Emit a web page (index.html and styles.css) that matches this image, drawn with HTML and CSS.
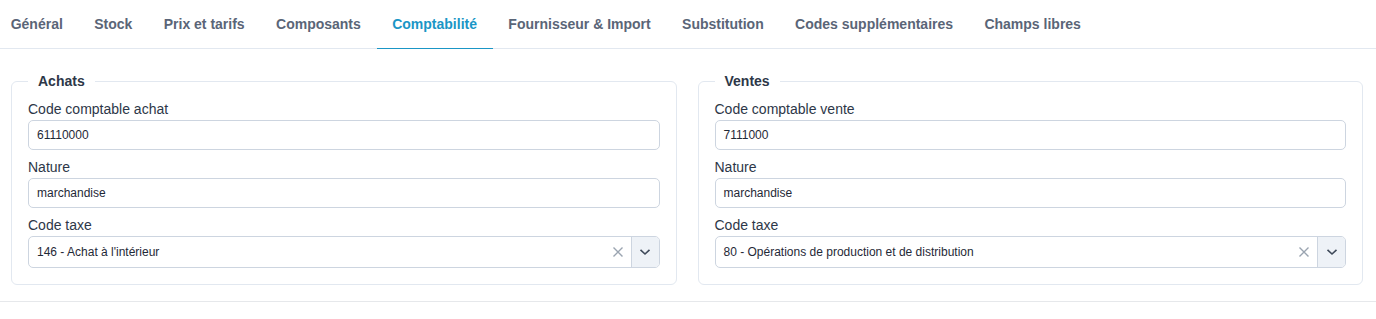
FILE: index.html
```html
<!DOCTYPE html>
<html lang="fr">
<head>
<meta charset="utf-8">
<title>Comptabilité</title>
<link rel="stylesheet" href="styles.css">
</head>
<body>
<div class="card">
  <nav class="tabs">
    <a class="tab">Général</a>
    <a class="tab">Stock</a>
    <a class="tab">Prix et tarifs</a>
    <a class="tab">Composants</a>
    <a class="tab active">Comptabilité</a>
    <a class="tab">Fournisseur &amp; Import</a>
    <a class="tab">Substitution</a>
    <a class="tab">Codes supplémentaires</a>
    <a class="tab">Champs libres</a>
  </nav>
  <div class="content">
    <fieldset class="group">
      <legend>Achats</legend>
      <div class="field">
        <label>Code comptable achat</label>
        <div class="input">61110000</div>
      </div>
      <div class="field">
        <label>Nature</label>
        <div class="input">marchandise</div>
      </div>
      <div class="field">
        <label>Code taxe</label>
        <div class="select">
          <span class="value">146 - Achat à l'intérieur</span>
          <span class="clear"><svg width="12" height="12" viewBox="0 0 12 12"><path d="M1.5 1.5L10.5 10.5M10.5 1.5L1.5 10.5" stroke="#9aa4b0" stroke-width="1.4" fill="none"/></svg></span>
          <span class="toggle"><svg width="12" height="8" viewBox="0 0 12 8"><path d="M1.5 1.8L6 6L10.5 1.8" stroke="#3f4a5a" stroke-width="1.6" fill="none"/></svg></span>
        </div>
      </div>
    </fieldset>
    <fieldset class="group">
      <legend>Ventes</legend>
      <div class="field">
        <label>Code comptable vente</label>
        <div class="input">7111000</div>
      </div>
      <div class="field">
        <label>Nature</label>
        <div class="input">marchandise</div>
      </div>
      <div class="field">
        <label>Code taxe</label>
        <div class="select">
          <span class="value">80 - Opérations de production et de distribution</span>
          <span class="clear"><svg width="12" height="12" viewBox="0 0 12 12"><path d="M1.5 1.5L10.5 10.5M10.5 1.5L1.5 10.5" stroke="#9aa4b0" stroke-width="1.4" fill="none"/></svg></span>
          <span class="toggle"><svg width="12" height="8" viewBox="0 0 12 8"><path d="M1.5 1.8L6 6L10.5 1.8" stroke="#3f4a5a" stroke-width="1.6" fill="none"/></svg></span>
        </div>
      </div>
    </fieldset>
  </div>
</div>
</body>
</html>
```
FILE: styles.css
```css
* { box-sizing: border-box; }
html, body { margin: 0; padding: 0; background: #fff; }
body {
  font-family: "Liberation Sans", Arial, sans-serif;
  color: #2d3748;
}
.card {
  background: #fff;
  border-bottom: 1px solid #e6e8eb;
  box-shadow: 0 1px 2px rgba(0,0,0,0.04);
  padding-bottom: 16px;
}
.tabs {
  display: flex;
  height: 49px;
  border-bottom: 1px solid #e2e8f0;
  margin-left: -5px;
}
.tab {
  display: flex;
  align-items: center;
  padding: 0 15.7px;
  font-size: 14px;
  font-weight: bold;
  color: #5a6577;
  height: 49px;
  margin-bottom: -1px;
  border-bottom: 1px solid transparent;
  cursor: pointer;
}
.tab.active {
  color: #1a96c6;
  border-bottom: 1px solid #1a96c6;
}
.content {
  display: grid;
  grid-template-columns: 1fr 1fr;
  column-gap: 21px;
  padding: 22px 13px 0 11px;
}
.group {
  margin: 0;
  border: 1px solid #e2e8f0;
  border-radius: 6px;
  padding: 8px 16px 16px 16px;
  min-width: 0;
}
.group legend {
  font-size: 14px;
  font-weight: bold;
  line-height: 20px;
  padding: 0 10px;
  color: #2d3748;
}
.field + .field { margin-top: 7px; }
.field label {
  display: block;
  font-size: 14px;
  line-height: 20px;
  margin-bottom: 1px;
  color: #2d3748;
}
.input, .select {
  height: 30px;
  border: 1px solid #cdd5e0;
  border-radius: 5px;
  font-size: 12px;
  color: #1f2937;
  display: flex;
  align-items: center;
}
.input { padding: 0 8px; }
.select { height: 32px; padding-left: 8px; }
.select .value { flex: 1; }
.select .clear {
  width: 26px;
  display: flex;
  align-items: center;
  justify-content: center;
  height: 100%;
}
.select .toggle {
  width: 28px;
  height: 100%;
  display: flex;
  align-items: center;
  justify-content: center;
  background: #eef2f7;
  border-left: 1px solid #cdd5e0;
  border-radius: 0 4px 4px 0;
}
```
